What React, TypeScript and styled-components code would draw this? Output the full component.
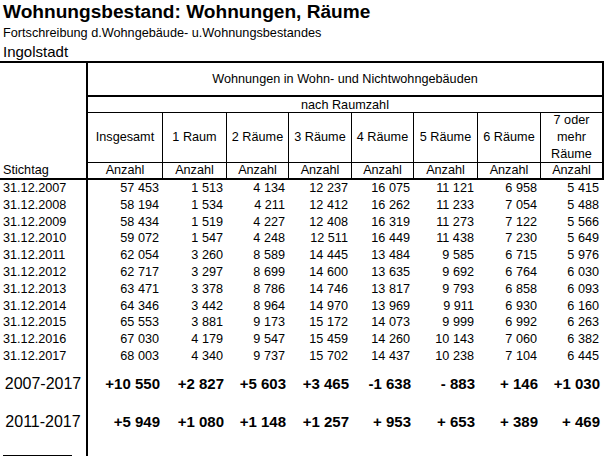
import React from 'react';
import styled, { createGlobalStyle } from 'styled-components';

const GlobalStyle = createGlobalStyle`
  html, body {
    margin: 0;
    padding: 0;
    background: #fff;
  }
  body {
    font-family: "Liberation Sans", Arial, sans-serif;
    color: #000;
  }
`;

const COLS = '88px 74px 64px 62px 63px 62px 64px 63px 62px';

const Page = styled.div`
  width: 605px;
`;

const TitleBlock = styled.div`
  height: 61px;
  padding-left: 3px;
`;

const Title = styled.h1`
  margin: 0;
  font-size: 19.1px;
  font-weight: bold;
  line-height: 24px;
  white-space: nowrap;
`;

const Subtitle = styled.div`
  font-size: 12.7px;
  line-height: 18px;
  white-space: nowrap;
`;

const Region = styled.div`
  font-size: 15px;
  line-height: 19px;
`;

const Header = styled.div`
  display: grid;
  grid-template-columns: ${COLS};
  grid-template-rows: 34px 16px 50px 15px;
  width: 604px;
  box-sizing: border-box;
  border-top: 2px solid #000;
  border-bottom: 2px solid #000;
  border-right: 2px solid #000;
  font-size: 12.67px;
`;

const StubHead = styled.div`
  grid-row: 1 / 5;
  grid-column: 1;
  border-right: 2px solid #000;
  display: flex;
  align-items: flex-end;
  padding-left: 3px;
  line-height: 15px;
`;

const SpanHead = styled.div<{ $row: number; $thick?: boolean }>`
  grid-row: ${(p) => p.$row};
  grid-column: 2 / 10;
  box-sizing: border-box;
  border-bottom: ${(p) => (p.$thick ? 2 : 1)}px solid #000;
  display: flex;
  align-items: center;
  justify-content: center;
  white-space: nowrap;
`;

const ColHead = styled.div<{ $first?: boolean }>`
  grid-row: 3;
  box-sizing: border-box;
  border-bottom: 1px solid #000;
  border-left: ${(p) => (p.$first ? 'none' : '1px solid #000')};
  display: flex;
  align-items: center;
  justify-content: center;
  text-align: center;
  line-height: 17px;
`;

const UnitHead = styled.div<{ $first?: boolean }>`
  grid-row: 4;
  border-left: ${(p) => (p.$first ? 'none' : '1px solid #000')};
  text-align: center;
  line-height: 15px;
`;

const Row = styled.div<{ $h: number }>`
  display: grid;
  grid-template-columns: ${COLS};
  height: ${(p) => p.$h}px;
  line-height: ${(p) => p.$h}px;
`;

const DateCell = styled.div`
  border-right: 2px solid #000;
  padding-left: 3px;
  font-size: 12.67px;
  white-space: nowrap;
`;

const NumCell = styled.div`
  text-align: right;
  padding-right: 3px;
  font-size: 12.67px;
  white-space: nowrap;
`;

const SumLabel = styled.div`
  border-right: 2px solid #000;
  text-align: center;
  font-size: 16px;
  white-space: nowrap;
`;

const SumCell = styled.div`
  text-align: right;
  padding-right: 2px;
  font-size: 15px;
  font-weight: bold;
  white-space: nowrap;
`;

const FootCell = styled.div`
  border-right: 2px solid #000;
  display: flex;
  align-items: flex-end;
`;

const Rule = styled.div`
  width: 69px;
  margin-left: 3px;
  border-bottom: 1px solid #000;
`;

const colHeads: React.ReactNode[] = [
  'Insgesamt',
  '1 Raum',
  '2 Räume',
  '3 Räume',
  '4 Räume',
  '5 Räume',
  '6 Räume',
  <>7 oder<br />mehr<br />Räume</>,
];

const rows: [string, string[]][] = [
  ['31.12.2007', ['57 453', '1 513', '4 134', '12 237', '16 075', '11 121', '6 958', '5 415']],
  ['31.12.2008', ['58 194', '1 534', '4 211', '12 412', '16 262', '11 233', '7 054', '5 488']],
  ['31.12.2009', ['58 434', '1 519', '4 227', '12 408', '16 319', '11 273', '7 122', '5 566']],
  ['31.12.2010', ['59 072', '1 547', '4 248', '12 511', '16 449', '11 438', '7 230', '5 649']],
  ['31.12.2011', ['62 054', '3 260', '8 589', '14 445', '13 484', '9 585', '6 715', '5 976']],
  ['31.12.2012', ['62 717', '3 297', '8 699', '14 600', '13 635', '9 692', '6 764', '6 030']],
  ['31.12.2013', ['63 471', '3 378', '8 786', '14 746', '13 817', '9 793', '6 858', '6 093']],
  ['31.12.2014', ['64 346', '3 442', '8 964', '14 970', '13 969', '9 911', '6 930', '6 160']],
  ['31.12.2015', ['65 553', '3 881', '9 173', '15 172', '14 073', '9 999', '6 992', '6 263']],
  ['31.12.2016', ['67 030', '4 179', '9 547', '15 459', '14 260', '10 143', '7 060', '6 382']],
  ['31.12.2017', ['68 003', '4 340', '9 737', '15 702', '14 437', '10 238', '7 104', '6 445']],
];

const sums: [string, string[], number][] = [
  ['2007-2017', ['+10 550', '+2 827', '+5 603', '+3 465', '-1 638', '- 883', '+ 146', '+1 030'], 38],
  ['2011-2017', ['+5 949', '+1 080', '+1 148', '+1 257', '+ 953', '+ 653', '+ 389', '+ 469'], 37],
];

const nb = (s: string) => s.replace(/ /g, '\u00a0');

export default function App() {
  return (
    <Page>
      <GlobalStyle />
      <TitleBlock>
        <Title>Wohnungsbestand: Wohnungen, Räume</Title>
        <Subtitle>Fortschreibung d.Wohngebäude- u.Wohnungsbestandes</Subtitle>
        <Region>Ingolstadt</Region>
      </TitleBlock>

      <Header>
        <StubHead>Stichtag</StubHead>
        <SpanHead $row={1} $thick>Wohnungen in Wohn- und Nichtwohngebäuden</SpanHead>
        <SpanHead $row={2}>nach Raumzahl</SpanHead>
        {colHeads.map((h, i) => (
          <ColHead key={i} $first={i === 0}>{h}</ColHead>
        ))}
        {colHeads.map((_, i) => (
          <UnitHead key={i} $first={i === 0}>Anzahl</UnitHead>
        ))}
      </Header>

      {rows.map(([date, vals]) => (
        <Row key={date} $h={16.8}>
          <DateCell>{date}</DateCell>
          {vals.map((v, i) => (
            <NumCell key={i}>{nb(v)}</NumCell>
          ))}
        </Row>
      ))}

      {sums.map(([label, vals, h]) => (
        <Row key={label} $h={h}>
          <SumLabel>{label}</SumLabel>
          {vals.map((v, i) => (
            <SumCell key={i}>{nb(v)}</SumCell>
          ))}
        </Row>
      ))}

      <Row $h={16}>
        <FootCell>
          <Rule />
        </FootCell>
      </Row>
    </Page>
  );
}
